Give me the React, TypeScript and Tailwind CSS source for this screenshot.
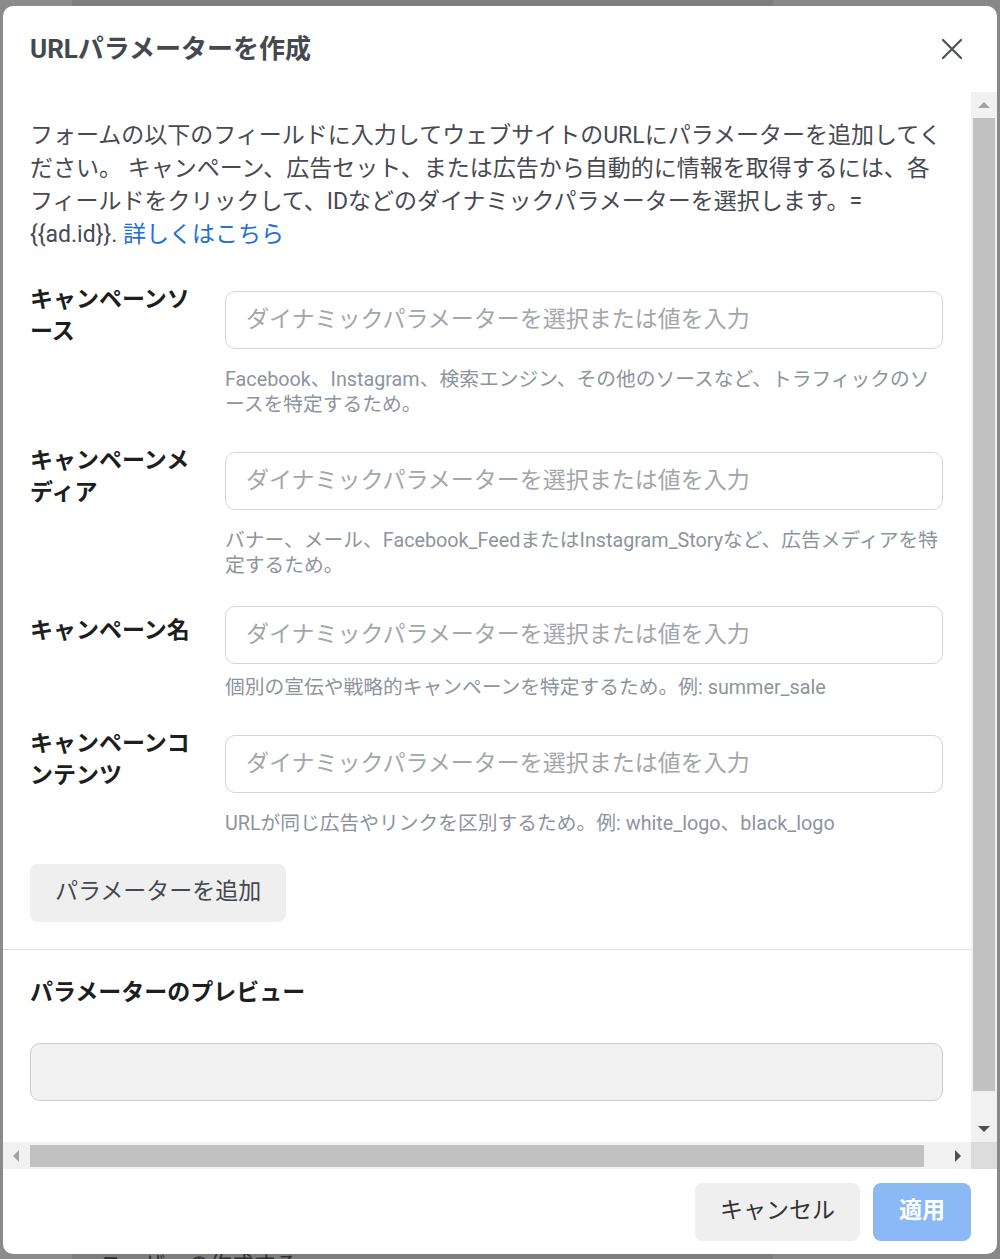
import React from "react";

type Field = {
  label: React.ReactNode;
  help: React.ReactNode;
};

const fields: Field[] = [
  {
    label: (
      <>
        キャンペーンソ
        <br />
        ース
      </>
    ),
    help: (
      <>
        Facebook、Instagram、検索エンジン、その他のソースなど、トラフィックのソ
        <br />
        ースを特定するため。
      </>
    ),
  },
  {
    label: (
      <>
        キャンペーンメ
        <br />
        ディア
      </>
    ),
    help: (
      <>
        バナー、メール、Facebook_FeedまたはInstagram_Storyなど、広告メディアを特
        <br />
        定するため。
      </>
    ),
  },
  {
    label: "キャンペーン名",
    help: "個別の宣伝や戦略的キャンペーンを特定するため。例: summer_sale",
  },
  {
    label: (
      <>
        キャンペーンコ
        <br />
        ンテンツ
      </>
    ),
    help: "URLが同じ広告やリンクを区別するため。例: white_logo、black_logo",
  },
];

function Arrow({ dir, color }: { dir: "up" | "down" | "left" | "right"; color: string }) {
  const points = {
    up: "0,8 6,2 12,8",
    down: "0,2 6,8 12,2",
    left: "8,0 2,6 8,12",
    right: "2,0 8,6 2,12",
  }[dir];
  const size = dir === "up" || dir === "down" ? { width: 12, height: 10 } : { width: 10, height: 12 };
  return (
    <svg {...size} viewBox={`0 0 ${size.width} ${size.height}`}>
      <polygon points={points} fill={color} />
    </svg>
  );
}

function ParamField({ field, first }: { field: Field; first?: boolean }) {
  return (
    <div className={first ? "mt-[33px]" : "mt-[27.5px]"}>
      <div className="flex items-center">
        <div className="w-[195px] shrink-0 pb-[8px] text-[23px] leading-[32px] font-bold text-[#1c1e21]">
          {field.label}
        </div>
        <input
          className="h-[58px] flex-1 rounded-[10px] border border-[#d3d5d9] bg-white px-[20px] text-[23px] text-[#1c1e21] outline-none placeholder:text-[#a3a6ab]"
          placeholder="ダイナミックパラメーターを選択または値を入力"
        />
      </div>
      <p className="mt-[11.5px] ml-[195px] text-[19.75px] leading-[25px] whitespace-nowrap text-[#8d949e]">
        {field.help}
      </p>
    </div>
  );
}

export default function App() {
  return (
    <div className="relative flex h-[1259px] w-[1000px] overflow-hidden font-[Roboto,'Noto_Sans_CJK_JP',sans-serif]">
      {/* dimmed page behind the dialog */}
      <div className="w-[72px] bg-[#8b8b8b]" />
      <div className="flex w-[701px] flex-col justify-end bg-[#7e7e7e]">
        <p className="mb-[-20px] pl-[28px] text-[22px] leading-[28px] text-[#2e2e2e]">ユーザーの作成する</p>
      </div>
      <div className="flex-1 bg-[#888888]" />

      {/* dialog */}
      <div className="absolute top-[6px] left-[3px] flex h-[1248px] w-[994px] flex-col overflow-hidden rounded-[10px] bg-white">
        <div className="flex h-[86px] shrink-0 items-center justify-between pr-[34px] pl-[27px]">
          <h1 className="text-[26px] font-bold text-[#444950]">URLパラメーターを作成</h1>
          <svg width="22" height="22" viewBox="0 0 22 22">
            <path d="M2 2 L20 20 M20 2 L2 20" stroke="#4b4f56" strokeWidth="2.2" strokeLinecap="round" />
          </svg>
        </div>

        <div className="flex h-[1077px] shrink-0 flex-col">
          <div className="flex h-[1050px]">
            <div className="flex-1 overflow-hidden">
              <div className="pt-[26.5px] pr-[28px] pb-[27px] pl-[27px]">
                <p className="text-[23px] leading-[33px] whitespace-nowrap text-[#474a50]">
                  フォームの以下のフィールドに入力してウェブサイトのURLにパラメーターを追加してく
                  <br />
                  ださい。 キャンペーン、広告セット、または広告から自動的に情報を取得するには、各
                  <br />
                  フィールドをクリックして、IDなどのダイナミックパラメーターを選択します。=
                  <br />
                  {"{{ad.id}}. "}
                  <a className="text-[#216fdb]">詳しくはこちら</a>
                </p>

                {fields.map((f, i) => (
                  <ParamField key={i} field={f} first={i === 0} />
                ))}

                <button className="mt-[27.5px] h-[58px] rounded-[8px] bg-[#efefef] px-[25px] text-[23px] text-[#444950]">
                  パラメーターを追加
                </button>
              </div>

              <div className="border-t border-[#dddfe2] px-[27px] pt-[27px] pr-[28px]">
                <h2 className="text-[23px] leading-[32px] font-bold text-[#1c1e21]">パラメーターのプレビュー</h2>
                <div className="mt-[34px] h-[58px] rounded-[10px] border border-[#cccccc] bg-[#f2f2f2]" />
              </div>
            </div>

            {/* vertical scrollbar */}
            <div className="flex w-[26px] shrink-0 flex-col bg-[#f1f1f1]">
              <div className="flex h-[26px] items-center justify-center">
                <Arrow dir="up" color="#a3a3a3" />
              </div>
              <div className="mx-[2px] h-[973px] bg-[#c1c1c1]" />
              <div className="flex-1" />
              <div className="flex h-[27px] items-center justify-center">
                <Arrow dir="down" color="#505050" />
              </div>
            </div>
          </div>

          {/* horizontal scrollbar */}
          <div className="flex h-[27px]">
            <div className="flex flex-1 bg-[#f1f1f1]">
              <div className="flex w-[26px] items-center justify-center">
                <Arrow dir="left" color="#a3a3a3" />
              </div>
              <div className="mt-[3px] mb-[2px] ml-[1px] w-[894px] bg-[#c1c1c1]" />
              <div className="flex-1" />
              <div className="flex w-[27px] items-center justify-center">
                <Arrow dir="right" color="#505050" />
              </div>
            </div>
            <div className="w-[26px] bg-[#dcdcdc]" />
          </div>
        </div>

        <div className="flex flex-1 items-center justify-end gap-[13px] pr-[26px]">
          <button className="h-[58px] w-[165px] rounded-[8px] bg-[#efefef] text-[23px] text-[#333333]">
            キャンセル
          </button>
          <button className="h-[58px] w-[98px] rounded-[8px] bg-[#8ab9f6] text-[23px] font-bold text-white">
            適用
          </button>
        </div>
      </div>
    </div>
  );
}
